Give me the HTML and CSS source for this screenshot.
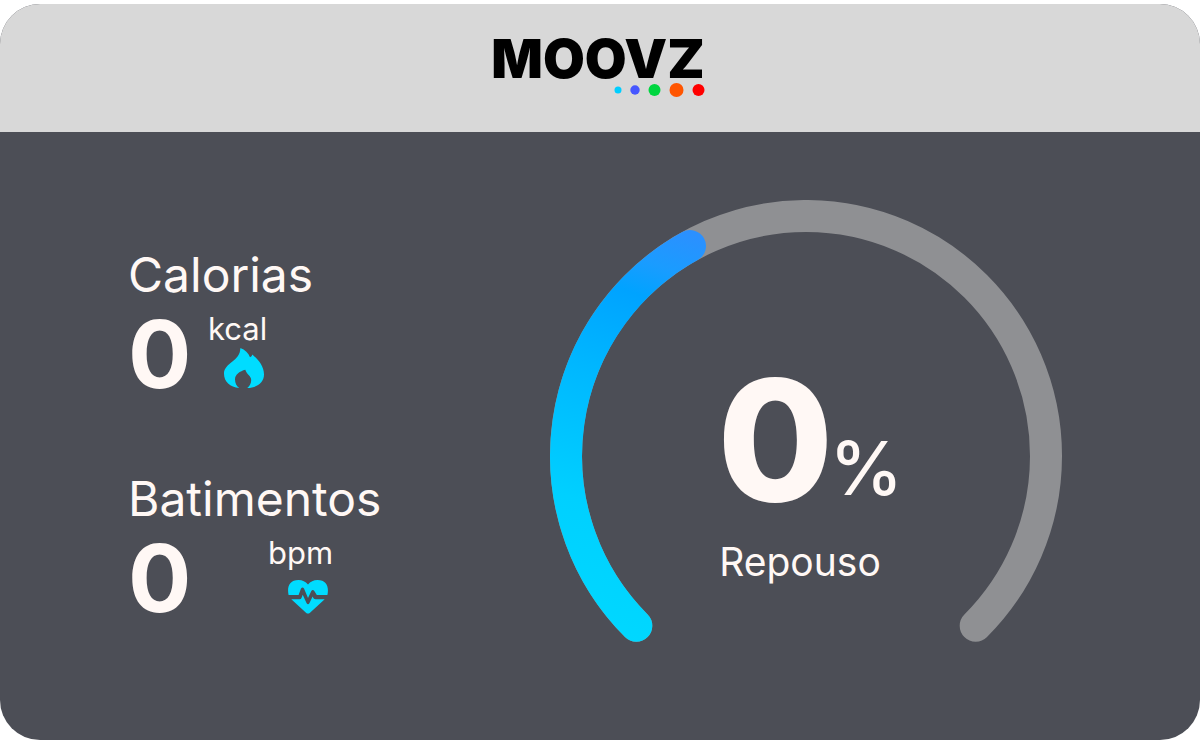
FILE: index.html
```html
<!DOCTYPE html>
<html lang="pt-BR">
<head>
<meta charset="utf-8">
<meta name="viewport" content="width=device-width, initial-scale=1">
<title>Moovz</title>
<link rel="stylesheet" href="styles.css">
</head>
<body>
<main class="card">
  <header class="card-header">
    <div class="logo">
      <h1 class="logo-name">MOOVZ</h1>
      <svg class="logo-dots" width="92" height="16" viewBox="0 0 92 16" aria-hidden="true">
        <circle cx="5" cy="8" r="3.5" fill="#00ceff"/>
        <circle cx="22" cy="8" r="4.7" fill="#4657ff"/>
        <circle cx="41.500" cy="8" r="6" fill="#00d640"/>
        <circle cx="63.500" cy="8" r="7" fill="#ff5500"/>
        <circle cx="85.500" cy="8" r="6" fill="#ff0000"/>
      </svg>
    </div>
  </header>
  <div class="card-body">
    <div class="metrics">
      <section class="metric">
        <h2 class="metric-label">Calorias</h2>
        <div class="metric-row">
          <span class="metric-value">0</span>
          <div class="metric-unit">
            <span>kcal</span>
            <svg class="metric-icon" width="40" height="40" viewBox="0 0 40 40" aria-hidden="true">
              <path fill="#00dcff" d="M16.300 0C21 1.800 24.500 5 26 9.300C27.300 8.800 28 7.900 28.300 6.600C34 11.500 40 18 40 26.500C40 34.500 33 39.800 23.300 40C26 37.800 27.200 35.200 27.200 32C27.200 28.200 23 26.700 21.300 21.800C16 23.200 11 26.500 11 31.200C11 35.200 12.600 38 15.300 40C6 39.500 0 33.500 0 25.800C0 14.500 16.500 13.500 16.300 0Z"/>
            </svg>
          </div>
        </div>
      </section>
      <section class="metric metric-wide">
        <h2 class="metric-label">Batimentos</h2>
        <div class="metric-row">
          <span class="metric-value">0</span>
          <div class="metric-unit">
            <span>bpm</span>
            <svg class="metric-icon" width="40" height="34" viewBox="0 0 40 34" aria-hidden="true">
              <g fill="#00dcff">
                <path d="M0.600 15C-1.200 7 1.500 0 10.500 0C14.500 0 17.500 1.800 20 4.400C22.500 1.800 25.500 0 29.500 0C38.500 0 41.200 7 39.400 15H28.800L26.300 11Q24.800 9.200 23.300 11L20 18L16 8.600Q14.500 6.600 13 8.600L10.600 15Z"/>
                <path d="M3.300 19.200H11.500Q13 19.200 13.600 17.700L14.700 14.800L18.500 23Q20 25.500 21.500 23L24.600 16.500L25.500 18.200Q26.300 19.200 27.700 19.200H36.700L22 32.700Q20 34.500 18 32.700Z"/>
              </g>
            </svg>
          </div>
        </div>
      </section>
    </div>
    <section class="gauge">
      <svg class="gauge-arc" viewBox="0 0 512 442" aria-hidden="true">
        <defs>
          <linearGradient id="effort" gradientUnits="userSpaceOnUse" x1="30" y1="430" x2="160" y2="40">
            <stop offset="0" stop-color="#00d8ff"/>
            <stop offset="0.300" stop-color="#00d0ff"/>
            <stop offset="0.600" stop-color="#00b8ff"/>
            <stop offset="0.820" stop-color="#00a3ff"/>
            <stop offset="0.900" stop-color="#1a9cff"/>
            <stop offset="1" stop-color="#2b90ff"/>
          </linearGradient>
        </defs>
        <g fill="none" stroke-width="32" stroke-linecap="round">
          <path stroke="#8f9093" d="M86.300 425.700A240 240 0 1 1 425.700 425.700"/>
          <path stroke="url(#effort)" d="M86.300 425.700A240 240 0 0 1 140 46"/>
        </g>
      </svg>
      <div class="gauge-reading">
        <p class="gauge-value"><span>0</span><span class="gauge-percent">%</span></p>
        <p class="gauge-zone">Repouso</p>
      </div>
    </section>
  </div>
</main>
</body>
</html>
```
FILE: styles.css
```css
* {
  box-sizing: border-box;
}

body {
  margin: 0;
  padding: 4px 0 11px;
  min-height: 100vh;
  display: flex;
  background: #fff;
  color: #fff8f5;
  font-family: Inter, "Liberation Sans", sans-serif;
}

h1, h2, p {
  margin: 0;
}

svg {
  display: block;
}

.card {
  flex: 1;
  display: flex;
  flex-direction: column;
  overflow: hidden;
  border-radius: 40px;
  background: #4c4e56;
}

.card-header {
  display: flex;
  justify-content: center;
  padding: 32px 4px 32px 0;
  background: #d8d8d8;
}

.logo {
  display: flex;
  flex-direction: column;
  align-items: flex-end;
  color: #000;
}

.logo-name {
  font-size: 54px;
  line-height: 46px;
  font-weight: 900;
}

.logo-dots {
  height: 16px;
  margin-bottom: 2px;
}

.card-body {
  flex: 1;
  display: flex;
  align-items: flex-start;
  justify-content: space-between;
  padding: 68px 138px 68px 128px;
}

.metrics {
  display: flex;
  flex-direction: column;
  gap: 66px;
  padding-top: 44px;
}

.metric-label {
  font-size: 48px;
  line-height: 62px;
  font-weight: 400;
}

.metric-row {
  display: flex;
  gap: 16px;
}

.metric-value {
  min-width: 64px;
  font-size: 94px;
  line-height: 96px;
  font-weight: 700;
}

.metric-wide .metric-value {
  min-width: 124px;
}

.metric-unit {
  font-size: 31px;
  line-height: 38px;
}

.metric-unit span {
  display: block;
  padding-top: 4px;
}

.metric-icon {
  margin-left: 16px;
}

.metric-wide .metric-icon {
  margin: 8px 0 0 20px;
}

.gauge {
  display: grid;
  flex: 0 1 512px;
}

.gauge-arc,
.gauge-reading {
  grid-area: 1 / 1;
}

.gauge-arc {
  width: 100%;
}

.gauge-reading {
  padding-top: 160px;
  text-align: center;
}

.gauge-value {
  display: flex;
  justify-content: center;
  align-items: flex-end;
  padding-left: 8px;
  font-size: 168px;
  line-height: 160px;
  font-weight: 800;
}

.gauge-percent {
  margin-left: -4px;
  font-size: 74px;
  line-height: 104px;
  font-weight: 500;
}

.gauge-zone {
  margin-top: 18px;
  padding-right: 12px;
  font-size: 39px;
  line-height: 48px;
}
```
